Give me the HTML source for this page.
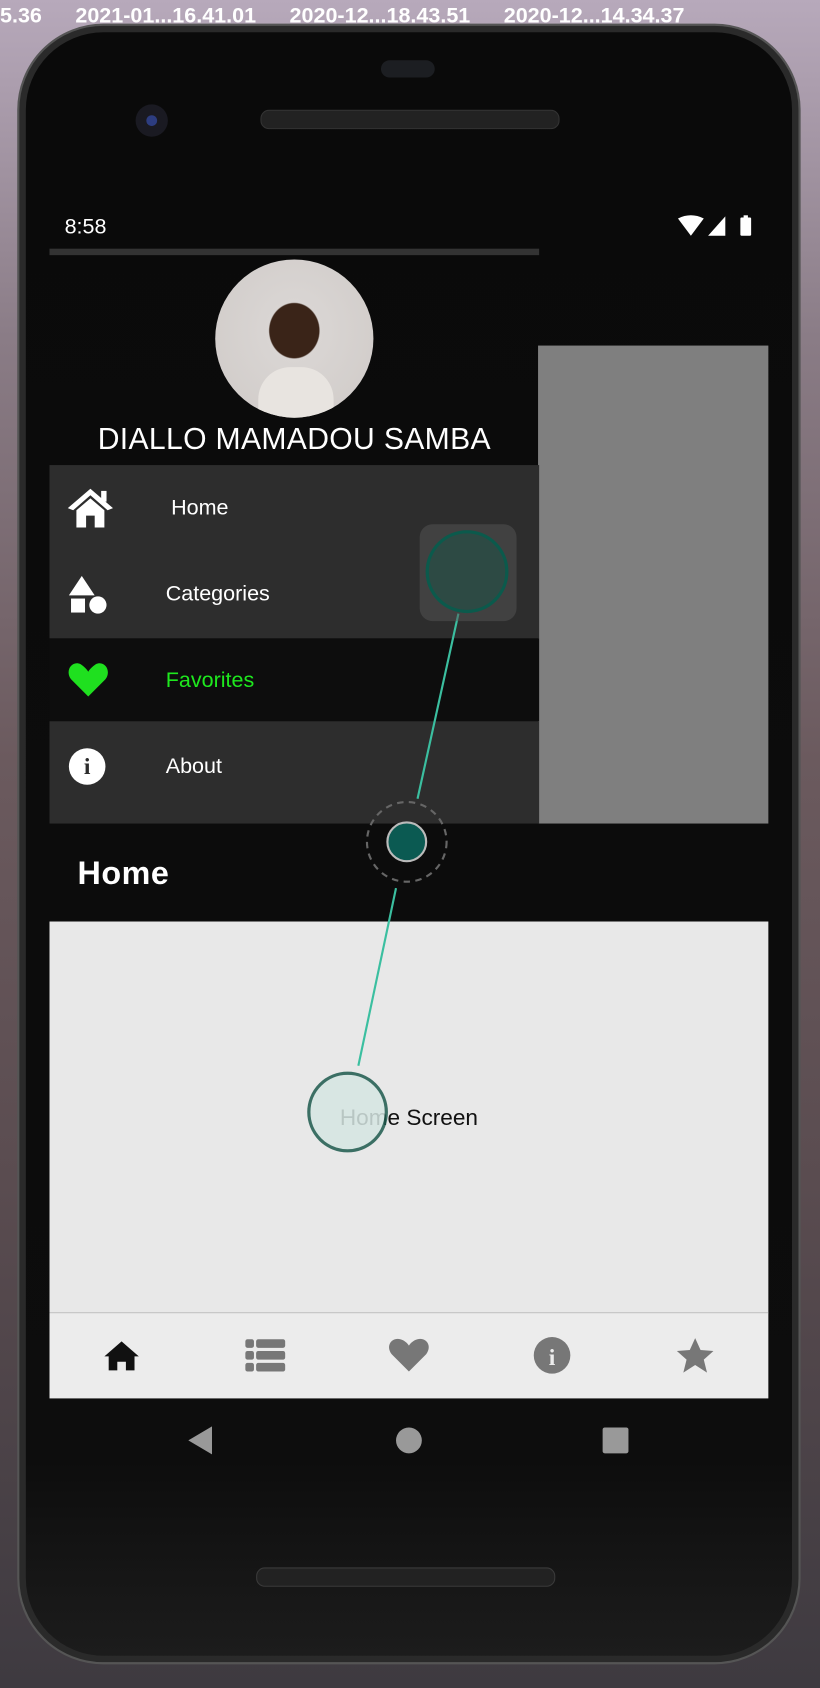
<!DOCTYPE html>
<html><head><meta charset="utf-8"><style>
html,body{margin:0;padding:0;width:820px;height:1688px;overflow:hidden;background:#4a4048;}
#w{position:absolute;left:0;top:0;width:762px;height:1568px;transform:scale(1.07612,1.07653);transform-origin:0 0;font-family:"Liberation Sans",sans-serif;background:linear-gradient(180deg,#b7a9bb 0%,#8a7c86 20%,#6b5a5e 45%,#5a4c50 70%,#3e3a40 100%);}
.a{position:absolute}
.desk{color:#fff;font-weight:bold;font-size:20px;}
</style></head><body><div id="w">
<div class="a desk" style="left:0;top:4px;white-space:nowrap;word-spacing:10px">5.36 &nbsp;2021-01...16.41.01 &nbsp;2020-12...18.43.51 &nbsp;2020-12...14.34.37</div>
<div class="a" style="left:16px;top:22px;width:728px;height:1524px;border-radius:80px;background:#2a2a2a;border:2px solid #555;box-sizing:border-box"></div>
<div class="a" style="left:24px;top:30px;width:712px;height:1508px;border-radius:72px;background:linear-gradient(180deg,#0a0a0a 0%,#0d0d0d 88%,#1c1c1c 100%)"></div>
<div class="a" style="left:354px;top:56px;width:50px;height:16px;border-radius:8px;background:#1c1e22"></div>
<div class="a" style="left:126px;top:97px;width:30px;height:30px;border-radius:50%;background:#1a1a22"><div class="a" style="left:10px;top:10px;width:10px;height:10px;border-radius:50%;background:#2d3d80"></div></div>
<div class="a" style="left:242px;top:102px;width:276px;height:16px;border-radius:8px;background:#222;border:1px solid #333"></div>
<div class="a" style="left:238px;top:1456px;width:276px;height:16px;border-radius:8px;background:#222;border:1px solid #3a3a3a"></div>
<div class="a" style="left:60px;top:200px;color:#fff;font-size:20px">8:58</div>
<svg class="a" style="left:628px;top:199px" width="76" height="22"><path d="M2 4 Q14 -2 26 4 L14 20Z" fill="#fff"/><path d="M46 2 L46 20 L30 20Z" fill="#fff"/><rect x="60" y="3" width="10" height="17" rx="1" fill="#fff"/><rect x="63" y="1" width="4" height="3" fill="#fff"/></svg>
<div class="a" style="left:46px;top:231px;width:455px;height:6px;background:#333"></div>
<div class="a" style="left:500px;top:321px;width:214px;height:444px;background:#7f7f7f"></div>
<div class="a" style="left:200px;top:241px;width:147px;height:147px;border-radius:50%;background:radial-gradient(ellipse at 50% 45%,#3a2418 0 22%,#d9d5d3 23%,#cfcac7 100%);overflow:hidden"><div class="a" style="left:40px;top:100px;width:70px;height:60px;border-radius:30px 30px 0 0;background:#e8e4e0"></div></div>
<div class="a" style="left:46px;top:392px;width:455px;text-align:center;color:#fff;font-size:28px;letter-spacing:0.3px">DIALLO MAMADOU SAMBA</div>
<div class="a" style="left:46px;top:432px;width:455px;height:161px;background:#2d2d2d"></div>
<div class="a" style="left:46px;top:593px;width:455px;height:77px;background:#0d0d0d"></div>
<div class="a" style="left:46px;top:670px;width:455px;height:95px;background:#2d2d2d"></div>
<svg class="a" style="left:61px;top:452px" width="46" height="40"><path d="M23 2 L2 20 L7 22 L23 8 L39 22 L44 20Z M10 22 L23 11 L36 22 L36 38 L27 38 L27 27 L19 27 L19 38 L10 38Z" fill="#fff"/><rect x="33" y="4" width="5" height="10" fill="#fff"/></svg>
<div class="a" style="left:159px;top:461px;color:#fff;font-size:20px">Home</div>
<svg class="a" style="left:64px;top:535px" width="38" height="36"><path d="M12 0 L24 18 L0 18Z" fill="#fff"/><rect x="2" y="21" width="13" height="13" fill="#fff"/><circle cx="27" cy="27" r="8" fill="#fff"/></svg>
<div class="a" style="left:154px;top:541px;color:#fff;font-size:20px">Categories</div>
<svg class="a" style="left:63px;top:615px" width="38" height="34"><path d="M19 32 L3 16 C-3 8 4 -2 12 2 C15 4 18 7 19 9 C20 7 23 4 26 2 C34 -2 41 8 35 16Z" fill="#1fe01f"/></svg>
<div class="a" style="left:154px;top:621px;color:#1ee81e;font-size:20px">Favorites</div>
<div class="a" style="left:64px;top:695px;width:34px;height:34px;border-radius:50%;background:#fff;color:#2d2d2d;font:bold 22px/34px 'Liberation Serif',serif;text-align:center">i</div>
<div class="a" style="left:154px;top:701px;color:#fff;font-size:20px">About</div>
<div class="a" style="left:72px;top:795px;color:#fff;font-size:30px;font-weight:bold;letter-spacing:0.5px">Home</div>
<div class="a" style="left:46px;top:856px;width:668px;height:363px;background:#e8e8e8"></div>
<div class="a" style="left:46px;top:1219px;width:668px;height:80px;background:#ececec;border-top:1px solid #d0d0d0;box-sizing:border-box"></div>
<div class="a" style="left:46px;top:1027px;width:668px;text-align:center;color:#111;font-size:21px">Home Screen</div>
<svg class="a" style="left:0;top:0" width="762" height="1568">
<line x1="426" y1="570" x2="388" y2="742" stroke="#3bbfa0" stroke-width="2"/>
<line x1="368" y1="825" x2="333" y2="990" stroke="#3bbfa0" stroke-width="2"/>
<rect x="390" y="487" width="90" height="90" rx="12" fill="#555" opacity=".5"/>
<circle cx="434" cy="531" r="37" fill="#2d4a44" stroke="#0b5a4c" stroke-width="3"/>
<circle cx="378" cy="782" r="37" fill="none" stroke="#666" stroke-width="2" stroke-dasharray="6 5"/>
<circle cx="378" cy="782" r="18" fill="#0b5a52" stroke="#bbb" stroke-width="2"/>
<circle cx="323" cy="1033" r="36" fill="#d6e6e3" stroke="#1e5a4e" stroke-width="3" opacity=".85"/>
<path d="M113 1246 L97 1260 L101 1260 L101 1273 L109 1273 L109 1265 L117 1265 L117 1273 L125 1273 L125 1260 L129 1260Z" fill="#111"/>
<g fill="#777"><rect x="228" y="1244" width="8" height="8" rx="2"/><rect x="238" y="1244" width="27" height="8" rx="2"/><rect x="228" y="1255" width="8" height="8" rx="2"/><rect x="238" y="1255" width="27" height="8" rx="2"/><rect x="228" y="1266" width="8" height="8" rx="2"/><rect x="238" y="1266" width="27" height="8" rx="2"/>
<path d="M380 1274 L364 1258 C358 1250 364 1242 372 1244 C376 1245 379 1248 380 1250 C381 1248 384 1245 388 1244 C396 1242 402 1250 396 1258Z"/>
<circle cx="513" cy="1259" r="17"/>
<path d="M646 1243 L651 1254 L663 1255 L654 1263 L657 1275 L646 1268 L635 1275 L638 1263 L629 1255 L641 1254Z"/>
<path d="M197 1325 L197 1351 L175 1338Z" fill="#999"/><circle cx="380" cy="1338" r="12" fill="#999"/><rect x="560" y="1326" width="24" height="24" rx="2" fill="#999"/></g>
<text x="513" y="1268" font-family="Liberation Serif" font-weight="bold" font-size="22" fill="#ececec" text-anchor="middle">i</text>
</svg>
</div></body></html>
